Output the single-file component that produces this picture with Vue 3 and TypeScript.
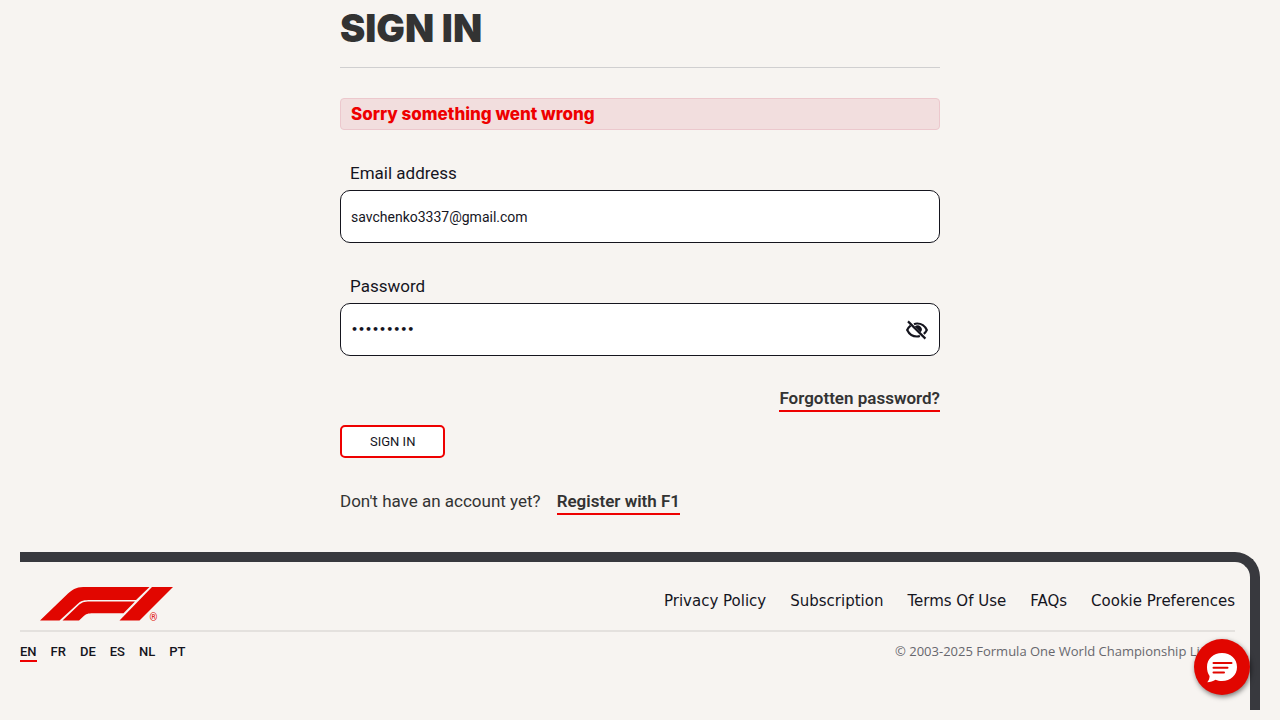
<script setup lang="ts">
import { ref } from 'vue'

const email = ref('savchenko3337@gmail.com')
const password = ref('formula01')
const passwordVisible = ref(false)
const activeLanguage = ref('EN')

const languages: string[] = ['EN', 'FR', 'DE', 'ES', 'NL', 'PT']
const footerLinks: string[] = [
  'Privacy Policy',
  'Subscription',
  'Terms Of Use',
  'FAQs',
  'Cookie Preferences',
]
</script>

<template>
  <div class="page">
    <main class="signin">
      <h1 class="title">SIGN IN</h1>
      <p class="alert" role="alert">Sorry something went wrong</p>
      <form @submit.prevent>
        <div class="field">
          <label for="email">Email address</label>
          <div class="control">
            <input id="email" v-model="email" type="email" autocomplete="username" />
          </div>
        </div>
        <div class="field">
          <label for="password">Password</label>
          <div class="control">
            <input
              id="password"
              v-model="password"
              class="secret"
              :type="passwordVisible ? 'text' : 'password'"
              autocomplete="current-password"
            />
            <button
              class="reveal"
              type="button"
              aria-label="Toggle password visibility"
              @click="passwordVisible = !passwordVisible"
            >
              <svg width="24" height="24" viewBox="0 0 24 24" fill="none" stroke="#15151e" stroke-width="2.2">
                <path d="M9 6.2C10 5.7 11 5.5 12.2 5.5c4.3 0 7.8 2.7 9.600 6.5-.7 1.5-1.700 2.8-3 3.8" />
                <path d="M5.6 7.6C4.200 8.700 3 10.200 2.200 12c1.800 3.800 5.300 6.500 9.800 6.500 1.200 0 2-.2 2.900-.5" />
                <path d="M3 3.400 20.400 20.600" />
                <path d="M9.800 8.600A4 4 0 0 1 15.600 14.200Z" fill="#15151e" stroke="none" />
              </svg>
            </button>
          </div>
        </div>
        <div class="forgotten"><a class="link" href="#">Forgotten password?</a></div>
        <button class="submit" type="submit">SIGN IN</button>
      </form>
      <p class="register">
        <span>Don't have an account yet?</span>
        <a class="link" href="#">Register with F1</a>
      </p>
    </main>

    <footer class="footer">
      <div class="footer-top">
        <a class="logo" href="#" aria-label="Formula 1">
          <svg width="134" height="36" viewBox="0 0 134 36" fill="#e10600">
            <path d="M0 33.500 28 6.500C34 1 38 0 46 0H109.500L96 13H51C44 13 41 13.500 37 17.500L19.500 33.500Z" />
            <path d="M22.500 33.500 38 18.800C41.500 15.300 44 14.500 50 14.500H95L83.500 26.300H53C48 26.300 46 26.800 43 29.800L39 33.500Z" />
            <path d="M112 0H133L99.500 33.500H79.500Z" />
            <text x="109.500" y="34">®</text>
          </svg>
        </a>
        <nav class="links" aria-label="Footer">
          <a v-for="item in footerLinks" :key="item" href="#">{{ item }}</a>
        </nav>
      </div>
      <div class="footer-bottom">
        <nav class="languages" aria-label="Language">
          <a
            v-for="code in languages"
            :key="code"
            href="#"
            :class="{ active: code === activeLanguage }"
            @click.prevent="activeLanguage = code"
          >{{ code }}</a>
        </nav>
        <p class="copyright">© 2003-2025 Formula One World Championship Limited</p>
      </div>
    </footer>

    <button class="chat" type="button" aria-label="Open chat">
      <svg width="32" height="32" viewBox="0 0 32 32">
        <path
          d="M16 2C24.500 2 31 7.800 31 16S24.500 30 16 30C13.500 30 11.500 29.600 9.500 28.800 7 30.400 4.500 31.200 1.300 31.200 2.800 29.500 3.500 27.500 3.600 25 1.800 22.500 1 19.500 1 16 1 7.800 7.500 2 16 2Z"
          fill="#fff"
        />
        <path d="M7.500 12H25.500M7.500 16.700H21.500M7.500 21.400H18" stroke="#e10600" stroke-width="2" stroke-linecap="round" />
      </svg>
    </button>
  </div>
</template>

<style>
body {
  margin: 0;
  background: #f7f4f1;
}
</style>

<style scoped>
.page {
  box-sizing: border-box;
  min-height: 100vh;
  padding: 0 20px 10px;
  display: flex;
  flex-direction: column;
  background: #f7f4f1;
  color: #333;
  font-family: Roboto, "Liberation Sans", sans-serif;
  font-size: 17px;
  line-height: 24px;
}

a {
  color: inherit;
  text-decoration: none;
}

.signin {
  width: 100%;
  max-width: 600px;
  margin: 0 auto;
}

.title {
  margin: 0 0 30px;
  padding: 9px 0 19px;
  border-bottom: 1px solid #d0cfd0;
  font-family: Inter, "DejaVu Sans", sans-serif;
  font-size: 38px;
  font-weight: 900;
  line-height: 39px;
}

.alert {
  margin: 0 0 30px;
  padding: 3px 10px;
  border: 1px solid #ecc8cd;
  border-radius: 4px;
  background: #f2dede;
  color: #ee0000;
  font-family: Inter, "DejaVu Sans", sans-serif;
  font-size: 17px;
  font-weight: 800;
}

.field {
  margin-bottom: 30px;
}

.field label {
  display: block;
  margin-bottom: 4px;
  padding: 0 10px;
  color: #15151e;
  line-height: 26px;
}

.control {
  box-sizing: border-box;
  height: 53px;
  padding: 0 10px;
  display: flex;
  align-items: center;
  border: 1px solid #15151e;
  border-radius: 10px;
  background: #fff;
}

.control input {
  flex: 1;
  min-width: 0;
  height: 48px;
  padding: 0;
  border: 0;
  outline: 0;
  background: transparent;
  color: #15151e;
  font: inherit;
  font-size: 14px;
}

.control .secret {
  font-family: "DejaVu Sans", sans-serif;
  font-size: 11px;
  font-weight: 700;
}

.reveal {
  display: flex;
  padding: 0;
  border: 0;
  background: none;
}

.forgotten {
  margin-bottom: 13px;
  display: flex;
  justify-content: flex-end;
}

.link {
  border-bottom: 2px solid #ee0000;
  font-weight: 600;
}

.submit {
  display: block;
  padding: 4px 28px;
  border: 2px solid #ee0000;
  border-radius: 5px;
  background: #fff;
  color: #15151e;
  font: inherit;
  font-size: 13px;
  line-height: 21px;
}

.register {
  margin: 31px 0 37px;
  display: flex;
  gap: 16px;
}

.footer {
  flex: 1;
  padding: 25px 15px 0 0;
  border: 0 solid #38393e;
  border-width: 10px 10px 0 0;
  border-top-right-radius: 25px;
}

.footer-top {
  display: flex;
  justify-content: space-between;
  align-items: flex-start;
  padding-bottom: 7px;
  border-bottom: 2px solid #e4e1de;
}

.logo {
  display: flex;
  margin-left: 20px;
}

.logo text {
  font-size: 10px;
}

.links {
  display: flex;
  gap: 24px;
  padding-top: 2px;
  color: #15151e;
  font-family: "DejaVu Sans", sans-serif;
  font-size: 15px;
}

.footer-bottom {
  display: flex;
  justify-content: space-between;
  align-items: flex-start;
  padding-top: 11px;
  font-size: 13px;
  line-height: 17px;
}

.languages {
  display: flex;
  gap: 14px;
  color: #15151e;
  font-weight: 500;
}

.languages .active {
  border-bottom: 2px solid #ee0000;
}

.copyright {
  margin: 0;
  color: #67676d;
  font-family: "Open Sans", "Noto Sans", sans-serif;
}

.chat {
  position: fixed;
  right: 30px;
  bottom: 25px;
  width: 56px;
  height: 56px;
  padding: 0;
  display: flex;
  align-items: center;
  justify-content: center;
  border: 0;
  border-radius: 50%;
  background: #e10600;
  box-shadow: 1px 2px 5px rgba(0, 0, 0, 0.5);
}
</style>
